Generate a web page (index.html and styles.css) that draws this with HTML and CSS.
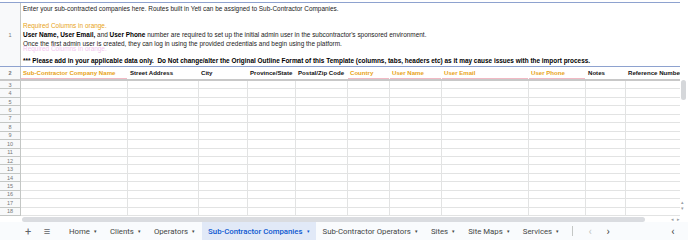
FILE: index.html
```html
<!DOCTYPE html>
<html>
<head>
<title>Sub-Contractor Companies</title>
<link rel="stylesheet" href="styles.css">
</head>
<body>

<div class="app">
  <div class="sheet">
    <div class="cells" id="cells">
      <div class="row row-intro">
        <div class="rh">1</div>
        <div class="intro">
          <div class="line">Enter your sub-contracted companies here. Routes built in Yeti can be assigned to Sub-Contractor Companies.</div>
          <div class="line blank"></div>
          <div class="line orange">Required Columns in orange.</div>
          <div class="line"><b>User Name, User Email,</b> and <b>User Phone</b> number are required to set up the initial admin user in the subcontractor's sponsored environment.</div>
          <div class="line ghost-wrap">Once the first admin user is created, they can log in using the provided credentials and begin using the platform.<span class="ghost">Required Columns in orange.</span></div>
          <div class="line blank"></div>
          <div class="line"><b>*** Please add in your applicable data only.&nbsp; Do Not change/alter the Original Outline Format of this Template (columns, tabs, headers etc) as it may cause issues with the import process.</b></div>
        </div>
      </div>
      <div class="row row-head">
        <div class="rh">2</div>
        <div class="c ca req">Sub-Contractor Company Name</div>
        <div class="c cb">Street Address</div>
        <div class="c cc">City</div>
        <div class="c cd">Province/State</div>
        <div class="c ce">Postal/Zip Code</div>
        <div class="c cf req">Country</div>
        <div class="c cg req">User Name</div>
        <div class="c ch req">User Email</div>
        <div class="c ci req">User Phone</div>
        <div class="c cj">Notes</div>
        <div class="c ck">Reference Number</div>
      </div>
    </div>
    <div class="vscroll">
      <div class="vthumb"></div>
      <div class="varrows"><span>&#9652;</span><span>&#9662;</span></div>
    </div>
  </div>

  <div class="hscroll">
    <div class="hgap"></div>
    <div class="hthumb"></div>
    <div class="harrows"><span>&#9666;</span><span>&#9656;</span></div>
  </div>

  <div class="tabs">
    <span class="tab-btn plus">+</span>
    <span class="tab-btn menu">&#8801;</span>
    <span class="tab">Home <i>&#9662;</i></span>
    <span class="tab">Clients <i>&#9662;</i></span>
    <span class="tab">Operators <i>&#9662;</i></span>
    <span class="tab active">Sub-Contractor Companies <i>&#9662;</i></span>
    <span class="tab">Sub-Contractor Operators <i>&#9662;</i></span>
    <span class="tab">Sites <i>&#9662;</i></span>
    <span class="tab">Site Maps <i>&#9662;</i></span>
    <span class="tab">Services <i>&#9662;</i></span>
    <span class="tab-sep"></span>
    <span class="tab-nav dim">&#8249;</span>
    <span class="tab-nav">&#8250;</span>
    <span class="tab-spacer"></span>
    <span class="tab-nav side">&#8249;</span>
  </div>
</div>

<script>
  // empty data rows 3..18
  const cells = document.getElementById('cells');
  const cols = ['ca','cb','cc','cd','ce','cf','cg','ch','ci','cj','ck'];
  for (let n = 3; n <= 18; n++) {
    const row = document.createElement('div');
    row.className = 'row row-data';
    let html = `<div class="rh">${n}</div>`;
    cols.forEach(c => { html += `<div class="c ${c}"></div>`; });
    row.innerHTML = html;
    cells.appendChild(row);
  }
</script>

</body>
</html>
```

FILE: styles.css
```css
body {
  margin: 0;
  width: 688px;
  height: 240px;
  overflow: hidden;
  background-color: #ffffff;
  font-family: "Liberation Sans", Arial, sans-serif;
}
.app {
  display: flex;
  flex-direction: column;
  height: 240px;
}
.sheet {
  display: flex;
  height: 216px;
  overflow: hidden;
}
.cells {
  flex: 1;
  padding-top: 2px;
  overflow: hidden;
}
.row {
  display: flex;
}
.rh {
  flex: 0 0 20px;
  background-color: #f8f9fa;
  border-right: 1px solid #c4c7c5;
  color: #777;
  font-size: 5.5px;
  display: flex;
  align-items: center;
  justify-content: center;
}
.c {
  flex: none;
  box-sizing: border-box;
  border-right: 1px solid #e2e3e3;
  white-space: nowrap;
  overflow: hidden;
  padding-left: 2px;
}
.ca { width: 107px; }
.cb { width: 71px; }
.cc { width: 49px; }
.cd { width: 48px; }
.ce { width: 52px; }
.cf { width: 42px; }
.cg { width: 52px; }
.ch { width: 87px; }
.ci { width: 57px; }
.cj { width: 40px; }
.ck { width: 55px; border-right: none; }

/* row 1: instructions */
.row-intro {
  height: 63px;
  border-top: 1px solid #8ea2cf;
  border-bottom: 1px solid #8ea2cf;
}
.intro {
  flex: 1;
  padding: 2px 0 0 2px;
  font-size: 6.45px;
  color: #222;
  white-space: nowrap;
  overflow: hidden;
}
.line {
  height: 8.7px;
  line-height: 8.7px;
}
.line b {
  color: #000;
}
.orange {
  color: #e8a317;
}
.ghost-wrap {
  position: relative;
}
.ghost {
  position: absolute;
  left: 0;
  top: 5px;
  color: #f2c6ee;
}

/* row 2: column headers */
.row-head {
  height: 12px;
  border-bottom: 2px solid #c8c8c8;
  font-size: 6.1px;
  font-weight: bold;
  color: #111;
}
.row-head .c {
  line-height: 12px;
  border-right-color: transparent;
}
.row-head .req {
  color: #e8a317;
  box-shadow: inset 0 -1px 0 #f1b9c4;
}

/* rows 3..18 */
.row-data {
  height: 8.45px;
  box-sizing: border-box;
  border-bottom: 1px solid #e2e3e3;
}
.row-data .rh {
  border-bottom: 1px solid #c4c7c5;
  margin-bottom: -1px;
}

/* scroll bars */
.vscroll {
  flex: 0 0 8px;
  position: relative;
  background-color: #ffffff;
}
.vthumb {
  position: absolute;
  top: 80px;
  left: 1px;
  width: 5px;
  height: 20px;
  border-radius: 3px;
  background-color: #d5d7da;
}
.varrows {
  position: absolute;
  left: 1px;
  top: 199px;
  display: flex;
  flex-direction: column;
  font-size: 5px;
  line-height: 6px;
  color: #9aa0a6;
}
.hscroll {
  display: flex;
  align-items: center;
  height: 6px;
}
.hgap {
  flex: 0 0 22px;
}
.hthumb {
  flex: 0 0 623px;
  height: 5px;
  border-radius: 3px;
  background-color: #dadce0;
}
.harrows {
  flex: 1;
  display: flex;
  justify-content: flex-end;
  gap: 3px;
  padding-right: 8px;
  font-size: 5px;
  color: #9aa0a6;
}

/* sheet tabs */
.tabs {
  flex: 1;
  display: flex;
  align-items: stretch;
  background-color: #f9fbfd;
  font-family: Roboto, "Liberation Sans", sans-serif;
  font-size: 7.8px;
  color: #444746;
}
.tab-btn {
  display: flex;
  align-items: center;
  justify-content: center;
  color: #5f6368;
}
.plus {
  margin-left: 23px;
  width: 10px;
  font-size: 11px;
}
.menu {
  margin-left: 9px;
  width: 10px;
  font-size: 11px;
  margin-right: 11px;
}
.tab {
  display: flex;
  align-items: center;
  padding: 0 6px;
  margin-right: 1px;
  white-space: nowrap;
}
.tab i {
  font-style: normal;
  font-size: 5px;
  margin-left: 4px;
}
.tab.active {
  background-color: #e1e9f7;
  color: #0b57d0;
  font-weight: 500;
}
.tab-sep {
  width: 1px;
  margin: 4px 8px 4px 6px;
  background-color: #c4c7c5;
}
.tab-nav {
  display: flex;
  align-items: center;
  width: 18px;
  justify-content: center;
  font-size: 11px;
  color: #444746;
}
.tab-nav.dim {
  color: #c4c7c5;
}
.tab-spacer {
  flex: 1;
}
.tab-nav.side {
  margin-right: 6px;
}
```
